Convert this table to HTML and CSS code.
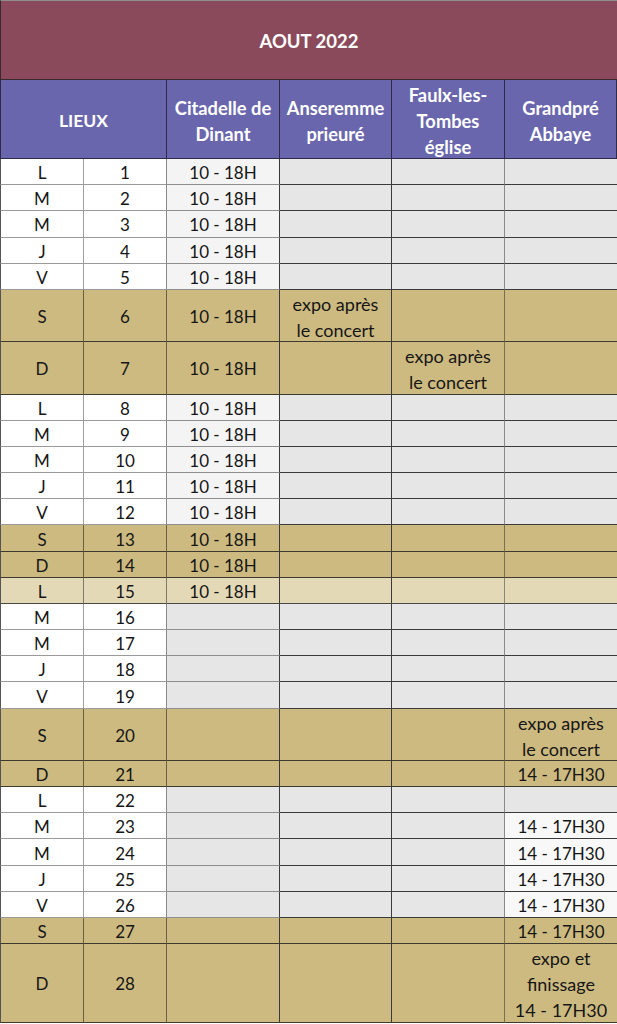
FILE: index.html
```html
<!DOCTYPE html>
<html lang="fr">
<head>
<meta charset="utf-8">
<title>Août 2022</title>
<link rel="stylesheet" href="styles.css">
</head>
<body>
<div class="sheet">
  <div class="c title">AOUT 2022</div>

  <div class="c head lieux">LIEUX</div>
  <div class="c head">Citadelle de<br>Dinant</div>
  <div class="c head">Anseremme<br>prieuré</div>
  <div class="c head">Faulx-les-<br>Tombes<br>église</div>
  <div class="c head">Grandpré<br>Abbaye</div>

  <div class="row"><div class="c day">L</div><div class="c num">1</div><div class="c s3 open">10 - 18H</div><div class="c s4"></div><div class="c s5"></div><div class="c s6"></div></div>
  <div class="row"><div class="c day">M</div><div class="c num">2</div><div class="c s3 open">10 - 18H</div><div class="c s4"></div><div class="c s5"></div><div class="c s6"></div></div>
  <div class="row"><div class="c day">M</div><div class="c num">3</div><div class="c s3 open">10 - 18H</div><div class="c s4"></div><div class="c s5"></div><div class="c s6"></div></div>
  <div class="row"><div class="c day">J</div><div class="c num">4</div><div class="c s3 open">10 - 18H</div><div class="c s4"></div><div class="c s5"></div><div class="c s6"></div></div>
  <div class="row"><div class="c day">V</div><div class="c num">5</div><div class="c s3 open">10 - 18H</div><div class="c s4"></div><div class="c s5"></div><div class="c s6"></div></div>
  <div class="row we tall"><div class="c day">S</div><div class="c num">6</div><div class="c s3">10 - 18H</div><div class="c s4 note">expo après<br>le concert</div><div class="c s5"></div><div class="c s6"></div></div>
  <div class="row we tall"><div class="c day">D</div><div class="c num">7</div><div class="c s3">10 - 18H</div><div class="c s4"></div><div class="c s5 note">expo après<br>le concert</div><div class="c s6"></div></div>
  <div class="row"><div class="c day">L</div><div class="c num">8</div><div class="c s3 open">10 - 18H</div><div class="c s4"></div><div class="c s5"></div><div class="c s6"></div></div>
  <div class="row"><div class="c day">M</div><div class="c num">9</div><div class="c s3 open">10 - 18H</div><div class="c s4"></div><div class="c s5"></div><div class="c s6"></div></div>
  <div class="row"><div class="c day">M</div><div class="c num">10</div><div class="c s3 open">10 - 18H</div><div class="c s4"></div><div class="c s5"></div><div class="c s6"></div></div>
  <div class="row"><div class="c day">J</div><div class="c num">11</div><div class="c s3 open">10 - 18H</div><div class="c s4"></div><div class="c s5"></div><div class="c s6"></div></div>
  <div class="row"><div class="c day">V</div><div class="c num">12</div><div class="c s3 open">10 - 18H</div><div class="c s4"></div><div class="c s5"></div><div class="c s6"></div></div>
  <div class="row we"><div class="c day">S</div><div class="c num">13</div><div class="c s3">10 - 18H</div><div class="c s4"></div><div class="c s5"></div><div class="c s6"></div></div>
  <div class="row we"><div class="c day">D</div><div class="c num">14</div><div class="c s3">10 - 18H</div><div class="c s4"></div><div class="c s5"></div><div class="c s6"></div></div>
  <div class="row ferie"><div class="c day">L</div><div class="c num">15</div><div class="c s3">10 - 18H</div><div class="c s4"></div><div class="c s5"></div><div class="c s6"></div></div>
  <div class="row"><div class="c day">M</div><div class="c num">16</div><div class="c s3"></div><div class="c s4"></div><div class="c s5"></div><div class="c s6"></div></div>
  <div class="row"><div class="c day">M</div><div class="c num">17</div><div class="c s3"></div><div class="c s4"></div><div class="c s5"></div><div class="c s6"></div></div>
  <div class="row"><div class="c day">J</div><div class="c num">18</div><div class="c s3"></div><div class="c s4"></div><div class="c s5"></div><div class="c s6"></div></div>
  <div class="row"><div class="c day">V</div><div class="c num">19</div><div class="c s3"></div><div class="c s4"></div><div class="c s5"></div><div class="c s6"></div></div>
  <div class="row we tall"><div class="c day">S</div><div class="c num">20</div><div class="c s3"></div><div class="c s4"></div><div class="c s5"></div><div class="c s6 note">expo après<br>le concert</div></div>
  <div class="row we"><div class="c day">D</div><div class="c num">21</div><div class="c s3"></div><div class="c s4"></div><div class="c s5"></div><div class="c s6">14 - 17H30</div></div>
  <div class="row"><div class="c day">L</div><div class="c num">22</div><div class="c s3"></div><div class="c s4"></div><div class="c s5"></div><div class="c s6"></div></div>
  <div class="row"><div class="c day">M</div><div class="c num">23</div><div class="c s3"></div><div class="c s4"></div><div class="c s5"></div><div class="c s6 open">14 - 17H30</div></div>
  <div class="row"><div class="c day">M</div><div class="c num">24</div><div class="c s3"></div><div class="c s4"></div><div class="c s5"></div><div class="c s6 open">14 - 17H30</div></div>
  <div class="row"><div class="c day">J</div><div class="c num">25</div><div class="c s3"></div><div class="c s4"></div><div class="c s5"></div><div class="c s6 open">14 - 17H30</div></div>
  <div class="row"><div class="c day">V</div><div class="c num">26</div><div class="c s3"></div><div class="c s4"></div><div class="c s5"></div><div class="c s6 open">14 - 17H30</div></div>
  <div class="row we"><div class="c day">S</div><div class="c num">27</div><div class="c s3"></div><div class="c s4"></div><div class="c s5"></div><div class="c s6">14 - 17H30</div></div>
  <div class="row we xtall"><div class="c day">D</div><div class="c num">28</div><div class="c s3"></div><div class="c s4"></div><div class="c s5"></div><div class="c s6 note">expo et<br>finissage<br>14 - 17H30</div></div>
</div>
</body>
</html>
```

FILE: styles.css
```css
html, body {
  margin: 0;
  padding: 0;
  background: #ffffff;
}

.sheet {
  display: grid;
  width: 617px;
  grid-template-columns: 84px 83px 113px 112px 113px 112px;
  grid-template-rows: 80px 79px;
  grid-auto-rows: 26.18px;
  font-family: Lato, "Open Sans", "Liberation Sans", sans-serif;
  font-size: 17px;
  color: #161616;
}

.row {
  display: contents;
}

.c {
  box-sizing: border-box;
  display: flex;
  align-items: center;
  justify-content: center;
  text-align: center;
  line-height: 26px;
  white-space: nowrap;
  padding-top: 3px;
  border-right: 1px solid #3a3a3a;
  border-bottom: 1px solid #3a3a3a;
  background: #e6e6e6;
}

.note {
  font-size: 18px;
}

.title {
  grid-column: 1 / -1;
  background: #8a4a5b;
  color: #ffffff;
  font-weight: 700;
  font-size: 18.5px;
  border-top: 1px solid #8c8c8c;
  border-left: 1px solid #3a2a2f;
  border-right: none;
  border-bottom: 1px solid #3a2a2f;
  padding-top: 1px;
}

.head {
  background: #6966ad;
  color: #ffffff;
  font-weight: 700;
  font-size: 18.3px;
  border-right-color: #2e2b4a;
  border-bottom-color: #2e2b4a;
}

.head.lieux {
  grid-column: span 2;
  border-left: 1px solid #2e2b4a;
  font-size: 17.5px;
}

.tall > .c { grid-row: span 2; }
.xtall > .c { grid-row: span 3; }

/* weekday rows */
.day, .num {
  background: #ffffff;
  border-bottom-color: #9a9a9a;
}
.day {
  border-left: 1px solid #555555;
  border-right-color: #9e9e9e;
}
.num { border-right-color: #8a8a8a; }
.s3 { border-bottom-color: #8e8e8e; }
.s5 { border-right-color: #8a8a8a; }
.s6 { border-right: none; }

.s3.open { background: #f4f4f4; }
.s6.open { background: #f8f8f8; }

/* weekend rows */
.we > .c {
  background: #cdba80;
  border-bottom-color: #3e3a30;
}
.we > .day { border-right-color: #6c6040; }
.we > .num { border-right-color: #6c6040; }
.we > .s5 { border-right-color: #7a6f50; }

/* holiday row */
.ferie > .c {
  background: #e3d9b7;
  border-bottom-color: #4a4a44;
}
.ferie > .day, .ferie > .num { border-right-color: #7e7a6a; }
.ferie > .s5 { border-right-color: #8a8676; }
```
